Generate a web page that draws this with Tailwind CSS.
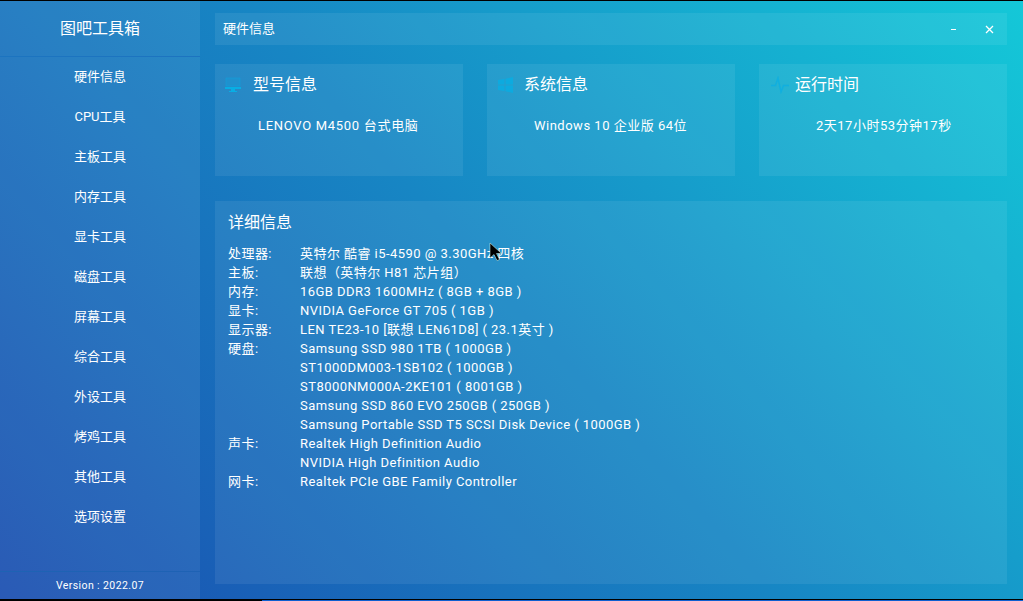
<!doctype html>
<html>
    <head>
        <meta charset="UTF-8">
        <title>图吧工具箱</title>
        <script src="https://cdn.jsdelivr.net/npm/@tailwindcss/browser@4"></script>
    </head>

    <body class="bg-black">
        <div class="relative w-[1023px] h-[601px] overflow-hidden bg-black text-white font-['Roboto','Noto_Sans_CJK_SC',sans-serif]">
            <div class="mt-px h-[598px] flex bg-[linear-gradient(48deg,#1a4eb0,#1786c4_50%,#14c8d8)]">
                <!-- sidebar -->
                <aside class="w-[200px] flex flex-col bg-white/7">
                    <div class="h-[55px] flex justify-center items-center border-b border-[#1c74c0] text-[16px] box-content">图吧工具箱</div>
                    <nav class="grow flex flex-col text-[13px]">
                        <a class="h-10 flex justify-center items-center">硬件信息</a>
                        <a class="h-10 flex justify-center items-center">CPU工具</a>
                        <a class="h-10 flex justify-center items-center">主板工具</a>
                        <a class="h-10 flex justify-center items-center">内存工具</a>
                        <a class="h-10 flex justify-center items-center">显卡工具</a>
                        <a class="h-10 flex justify-center items-center">磁盘工具</a>
                        <a class="h-10 flex justify-center items-center">屏幕工具</a>
                        <a class="h-10 flex justify-center items-center">综合工具</a>
                        <a class="h-10 flex justify-center items-center">外设工具</a>
                        <a class="h-10 flex justify-center items-center">烤鸡工具</a>
                        <a class="h-10 flex justify-center items-center">其他工具</a>
                        <a class="h-10 flex justify-center items-center">选项设置</a>
                    </nav>
                    <div class="h-[27px] flex justify-center items-center border-t border-[#1e62b4] text-[10.5px] tracking-[0.4px] box-content">Version : 2022.07</div>
                </aside>

                <!-- main -->
                <main class="grow pl-[15px] pr-[16px] pt-[12px] flex flex-col">
                    <header class="h-[32px] flex items-center pl-2 bg-white/7 text-[13px]">
                        <span class="grow">硬件信息</span>
                        <span class="w-[5px] h-px bg-white"></span>
                        <svg class="mr-[13px] ml-[29px]" width="9" height="9" viewBox="0 0 9 9" fill="none" stroke="white" stroke-width="1.3"><path d="M1 1 8 8M8 1 1 8"/></svg>
                    </header>

                    <section class="mt-[19px] grid grid-cols-3 gap-6">
                        <div class="h-[112px] bg-white/7 flex flex-col">
                            <div class="h-[42px] flex items-center pl-[10px] gap-[12px] text-[16px]">
                                <svg class="-mt-px" width="16" height="16" viewBox="0 0 16 16"><path d="M1 1h14v8H1z" fill="#0ea5e0" fill-opacity="0.3" stroke="#0ea5e0" stroke-opacity="0.5"/><path d="M0 10h16v2H0zM6 12h4v2H6zM4 14h8v1H4z" fill="#08aee4"/></svg>
                                <span>型号信息</span>
                            </div>
                            <div class="mt-[10px] text-[13px] tracking-[0.7px] pl-[43px]">LENOVO M4500 台式电脑</div>
                        </div>
                        <div class="h-[112px] bg-white/7 flex flex-col">
                            <div class="h-[42px] flex items-center pl-[11px] gap-[11px] text-[16px]">
                                <svg class="-mt-px" width="15" height="16" viewBox="0 0 15 16" fill="#08aee4" fill-opacity="0.8"><path d="M0 3 6.500 2v5.500H0zM7.500 1.800 15 0v7.500H7.500zM0 8.500h6.500V14L0 13zM7.500 8.500H15V16l-7.500-1.800z"/></svg>
                                <span>系统信息</span>
                            </div>
                            <div class="mt-[10px] text-[13px] tracking-[0.5px] pl-[47px]">Windows 10 企业版 64位</div>
                        </div>
                        <div class="h-[112px] bg-white/7 flex flex-col">
                            <div class="h-[42px] flex items-center pl-[12px] gap-[6px] text-[16px]">
                                <svg class="-mt-px" width="18" height="18" viewBox="0 0 18 18" fill="none" stroke="#08aee4" stroke-width="1.500" stroke-opacity="0.7"><path d="M0 9.500h4.500L7 2l3 14 2.500-6.500H18"/></svg>
                                <span>运行时间</span>
                            </div>
                            <div class="mt-[10px] text-[13px] tracking-[0.5px] pl-[57px]">2天17小时53分钟17秒</div>
                        </div>
                    </section>

                    <section class="mt-[25px] h-[383px] bg-white/7 pl-[13px] pt-[11px]">
                        <h2 class="text-[16px] leading-[22px]">详细信息</h2>
                        <dl class="mt-[10px] grid grid-cols-[72px_1fr] text-[13px] leading-[19px] tracking-[0.45px]">
                            <dt>处理器:</dt><dd>英特尔 酷睿 i5-4590 @ 3.30GHz 四核</dd>
                            <dt>主板:</dt><dd>联想（英特尔 H81 芯片组）</dd>
                            <dt>内存:</dt><dd>16GB DDR3 1600MHz ( 8GB + 8GB )</dd>
                            <dt>显卡:</dt><dd>NVIDIA GeForce GT 705 ( 1GB )</dd>
                            <dt>显示器:</dt><dd>LEN TE23-10 [联想 LEN61D8] ( 23.1英寸 )</dd>
                            <dt>硬盘:</dt><dd>Samsung SSD 980 1TB ( 1000GB )</dd>
                            <dt></dt><dd>ST1000DM003-1SB102 ( 1000GB )</dd>
                            <dt></dt><dd>ST8000NM000A-2KE101 ( 8001GB )</dd>
                            <dt></dt><dd>Samsung SSD 860 EVO 250GB ( 250GB )</dd>
                            <dt></dt><dd>Samsung Portable SSD T5 SCSI Disk Device ( 1000GB )</dd>
                            <dt>声卡:</dt><dd>Realtek High Definition Audio</dd>
                            <dt></dt><dd>NVIDIA High Definition Audio</dd>
                            <dt>网卡:</dt><dd>Realtek PCIe GBE Family Controller</dd>
                        </dl>
                    </section>
                </main>
            </div>

            <!-- sliver of the desktop below the window -->
            <div class="mt-px h-px ml-[262px] bg-[#1060d0]"></div>

            <!-- mouse pointer -->
            <svg class="absolute left-[489px] top-[242px]" width="13" height="20" viewBox="0 0 13 20"><path d="M1 1v15l4-3.500 3 6 2.500-1-3-6h5z" fill="black" stroke="#dfe" stroke-width="0.500"/></svg>
        </div>
    </body>
</html>
